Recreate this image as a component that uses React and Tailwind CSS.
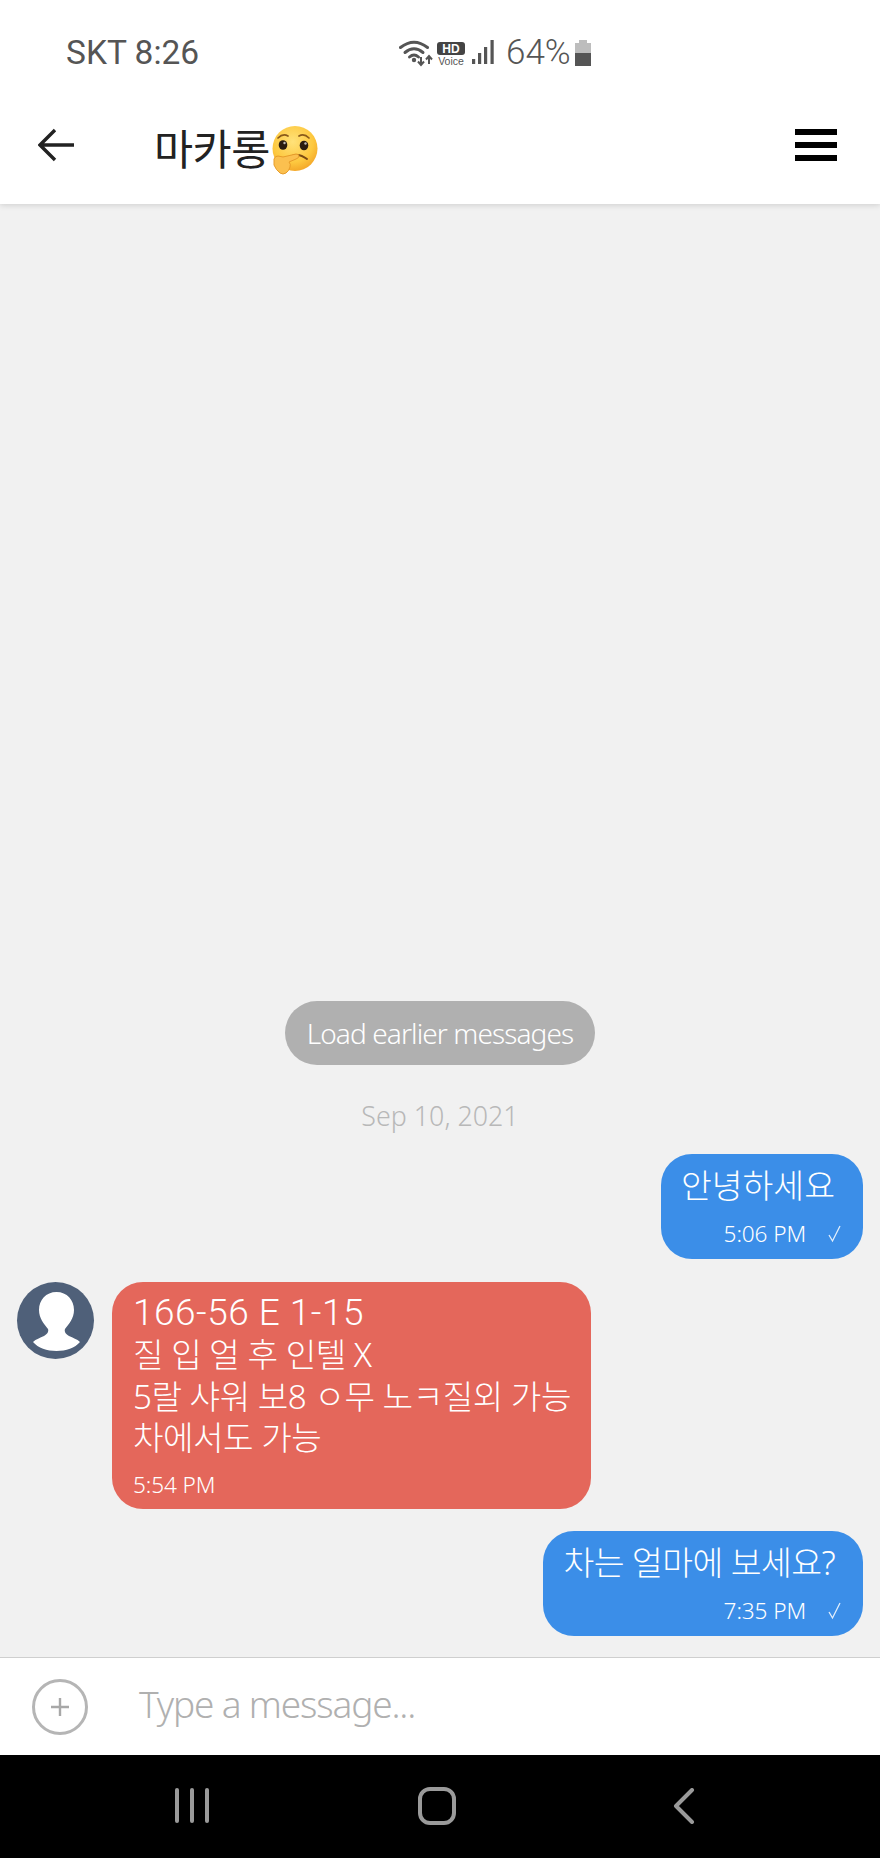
import React from "react";

const KR = "font-['Noto_Sans','Noto_Sans_CJK_KR',sans-serif]";

function Emoji() {
  return (
    <svg width="50" height="52" viewBox="0 0 50 52" className="shrink-0">
      <defs>
        <radialGradient id="f" cx="0.45" cy="0.35" r="0.7">
          <stop offset="0" stopColor="#ffe27a" />
          <stop offset="0.65" stopColor="#fdc83f" />
          <stop offset="1" stopColor="#f2a125" />
        </radialGradient>
      </defs>
      <circle cx="25" cy="24.5" r="22.5" fill="url(#f)" />
      <path d="M8 14q5-5 10-2" stroke="#8a5a1a" strokeWidth="1.7" fill="none" strokeLinecap="round" />
      <path d="M29 12q5-3 10 2" stroke="#8a5a1a" strokeWidth="1.7" fill="none" strokeLinecap="round" />
      <ellipse cx="13" cy="21" rx="4.3" ry="4.8" fill="#2b1d10" />
      <ellipse cx="34" cy="21.5" rx="4.3" ry="4.8" fill="#2b1d10" />
      <circle cx="14.5" cy="19" r="1.2" fill="#fff" opacity="0.7" />
      <circle cx="35.5" cy="19.5" r="1.2" fill="#fff" opacity="0.7" />
      <path d="M20 33q8-5 17 2" stroke="#7a4a12" strokeWidth="2" fill="none" strokeLinecap="round" />
      <path d="M4 35q1-3 4-3l5 1 13-3q3 0 3 2t-3 3l-7 3q2 2 1 5-1 4-4 6-3 2-6 0-4-3-6-8z" fill="#fbc04f" stroke="#e79c2a" strokeWidth="1" />
    </svg>
  );
}

function StatusIcons() {
  return (
    <svg width="96" height="30" viewBox="0 0 96 30" className="shrink-0">
      <g fill="none" stroke="#555" strokeWidth="3" strokeLinecap="round">
        <path d="M1.500 8.500Q15-2 28.500 8.500" />
        <path d="M6 13.500Q15 6 24 13.500" />
        <path d="M10.500 18Q15 14 19.500 18" />
      </g>
      <circle cx="15" cy="21" r="2.200" fill="#555" />
      <path d="M22 18v8M19 22.500l3 3.500 3-3.500" stroke="#555" strokeWidth="2" fill="none" />
      <path d="M30 25v-8M27 20.500l3-3.500 3 3.500" stroke="#555" strokeWidth="2" fill="none" />
      <rect x="38" y="3" width="28" height="13" rx="3" fill="#444" />
      <text x="52" y="13.500" textAnchor="middle" fontSize="12" fontWeight="700" fill="#fff" fontFamily="Liberation Sans">HD</text>
      <text x="52" y="26" textAnchor="middle" fontSize="10.500" fill="#555" fontFamily="Liberation Sans">Voice</text>
      <rect x="73" y="20" width="3.200" height="5" fill="#555" />
      <rect x="79" y="14" width="3.200" height="11" fill="#555" />
      <rect x="85" y="8" width="3.200" height="17" fill="#555" />
      <rect x="91.500" y="1" width="3.200" height="24" fill="#555" />
    </svg>
  );
}

function Battery() {
  return (
    <svg width="18" height="27" viewBox="0 0 18 27" className="shrink-0">
      <path d="M5 0h8v3h4v10H1V3h4z" fill="#bdbdbd" />
      <rect x="1" y="13" width="16" height="13" fill="#555" />
    </svg>
  );
}

function Avatar() {
  return (
    <div className="w-[77px] h-[77px] rounded-full bg-[#4f6079] overflow-hidden shrink-0">
      <svg width="77" height="77" viewBox="0 0 77 77">
        <path d="M39.500 10C29 10 22 18 22 28C22 36 27 42 31 47C32 50 30 52 27 54C23 56 19 57 16 60C21 66 30 69 39.500 69C49 69 58 66 63 60C60 57 56 56 52 54C49 52 47 50 48 47C52 42 57 36 57 28C57 18 50 10 39.500 10Z" fill="#fff" />
      </svg>
    </div>
  );
}

function Check() {
  return (
    <svg width="16" height="18" viewBox="0 0 16 18" className="shrink-0">
      <path d="M2 10l3.500 6L13 1" fill="none" stroke="#fff" strokeWidth="1.3" opacity="0.85" />
    </svg>
  );
}

function Sent({ text, time, tight }) {
  return (
    <div className="flex justify-end pr-[17px]">
      <div className="h-[105px] rounded-[31px] bg-[#3b8ee8] pl-[20px] pr-[20px] pt-[6px] text-white">
        <div className={`text-[33.5px] leading-[50px] font-light pr-[8px] ${tight ? "tracking-[-0.6px]" : "tracking-[0px]"}`}>{text}</div>
        <div className="flex justify-end items-center gap-[21px] mt-[8px] h-[32px]">
          <span className="text-[22.6px] font-light tracking-[-0.1px]">{time}</span>
          <Check />
        </div>
      </div>
    </div>
  );
}

export default function App() {
  return (
    <div className={`w-[880px] h-[1858px] flex flex-col bg-[#f1f1f1] overflow-hidden ${KR}`}>
      <div className="relative z-10 bg-white h-[204px] shrink-0 shadow-[0_1px_6px_rgba(0,0,0,0.15)] flex flex-col">
        <div className="h-[107px] flex items-center pl-[66px] shrink-0">
          <span className="w-[333px] text-[33.5px] text-[#555] font-['Roboto',sans-serif] font-normal">SKT 8:26</span>
          <StatusIcons />
          <span className="ml-[11px] w-[68px] text-[35px] text-[#555] font-['Roboto',sans-serif] font-light">64%</span>
          <Battery />
        </div>
        <div className="flex items-center h-[66px] mt-[5px] pl-[38px] pr-[43px]">
          <svg width="37" height="34" viewBox="0 0 37 34" className="shrink-0">
            <path d="M36 17H3M17 2 2 17l15 15" fill="none" stroke="#222" strokeWidth="3.4" />
          </svg>
          <span className="ml-[79px] mt-[8px] text-[42.5px] leading-[60px] text-[#222] font-normal tracking-[-0.5px]">마카롱</span>
          <span className="mt-[10px]"><Emoji /></span>
          <div className="ml-auto flex flex-col gap-[6.5px]">
            <div className="w-[42px] h-[6.5px] bg-black" />
            <div className="w-[42px] h-[6.5px] bg-black" />
            <div className="w-[42px] h-[6.5px] bg-black" />
          </div>
        </div>
      </div>

      <div className="flex-1 flex flex-col justify-end pb-[21px]">
        <div className="self-center h-[64px] w-[310px] rounded-full bg-[#b0b0b0] text-white text-[28px] font-light tracking-[-0.9px] flex items-center justify-center">
          Load earlier messages
        </div>
        <div className="text-center text-[#b8b8b8] text-[26.8px] font-light mt-[30px] mb-[17px] leading-[42px]">Sep 10, 2021</div>
        <Sent text="안녕하세요" time="5:06 PM" />
        <div className="flex gap-[18px] pl-[17px] mt-[23px]">
          <Avatar />
          <div className="w-[479px] h-[227px] rounded-[31px] bg-[#e4675b] pl-[21px] pt-[9px] text-white">
            <div className="text-[33.2px] leading-[41.5px] font-light tracking-[-0.5px] whitespace-nowrap">
              <div className="text-[37px] leading-[43px] font-['Roboto',sans-serif] tracking-[0.5px]">166-56 E 1-15</div>
              <div>질 입 얼 후 인텔 X</div>
              <div>5랄 샤워 보8 ㅇ무 노ㅋ질외 가능</div>
              <div>차에서도 가능</div>
            </div>
            <div className="text-[22.6px] font-light tracking-[-0.1px] mt-[9px]">5:54 PM</div>
          </div>
        </div>
        <div className="mt-[22px]">
          <Sent tight text="차는 얼마에 보세요?" time="7:35 PM" />
        </div>
      </div>

      <div className="h-[98px] shrink-0 bg-white border-t border-[#cfcfcf] flex items-center pl-[32px]">
        <div className="w-[56px] h-[56px] rounded-full border-[3.5px] border-[#b5b5b5] flex items-center justify-center shrink-0">
          <svg width="20" height="20" viewBox="0 0 20 20">
            <path d="M10 1v18M1 10h18" stroke="#a8a8a8" strokeWidth="2.4" />
          </svg>
        </div>
        <span className="ml-[51px] mb-[6px] text-[37px] font-light text-[#b0b0b0] tracking-[-1.15px]">Type a message...</span>
      </div>

      <div className="h-[103px] shrink-0 bg-black flex items-center pb-[2px]">
        <div className="w-[880px] flex items-center">
          <div className="ml-[175px] flex gap-[11px]">
            <div className="w-[4px] h-[35px] rounded-full bg-[#9a9a9a]" />
            <div className="w-[4px] h-[35px] rounded-full bg-[#9a9a9a]" />
            <div className="w-[4px] h-[35px] rounded-full bg-[#9a9a9a]" />
          </div>
          <div className="ml-[209px] w-[38px] h-[38px] rounded-[12px] border-[4px] border-[#9a9a9a]" />
          <svg width="22" height="36" viewBox="0 0 22 36" className="ml-[217px]">
            <path d="M19 2 3 18l16 16" fill="none" stroke="#9a9a9a" strokeWidth="4" strokeLinecap="round" strokeLinejoin="round" />
          </svg>
        </div>
      </div>
    </div>
  );
}
